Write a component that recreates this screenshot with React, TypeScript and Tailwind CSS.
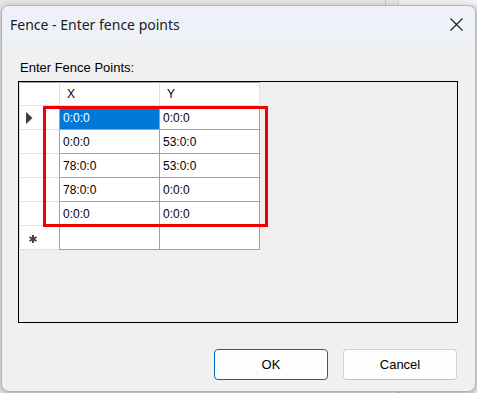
import React from 'react';

const rows: [string, string][] = [
  ['0:0:0', '0:0:0'],
  ['0:0:0', '53:0:0'],
  ['78:0:0', '53:0:0'],
  ['78:0:0', '0:0:0'],
  ['0:0:0', '0:0:0'],
];

const RowArrow: React.FC = () => (
  <svg width="7" height="12" viewBox="0 0 7 12" className="ml-[6px]">
    <path d="M0 0 L6.5 6 L0 12 Z" fill="#3c3c3c" />
  </svg>
);

const NewRowStar: React.FC = () => (
  <svg width="8" height="8" viewBox="0 0 8 8" className="ml-[9px] mt-[3px]">
    <g stroke="#444" strokeWidth="2" strokeLinecap="butt">
      <line x1="4" y1="0" x2="4" y2="8" />
      <line x1="0.5" y1="2" x2="7.5" y2="6" />
      <line x1="0.5" y1="6" x2="7.5" y2="2" />
    </g>
  </svg>
);

const App: React.FC = () => {
  return (
    <div className="relative w-[477px] h-[393px] bg-[#e8e8e8] pt-[5px] pl-[1px] overflow-hidden font-['Liberation_Sans',Arial,sans-serif]">
      {/* bits of the windows behind */}
      <div className="absolute left-[385px] top-0 w-px h-[6px] bg-[#c8c8c8]" />
      <div className="absolute left-[398px] top-0 w-px h-[6px] bg-[#d4d4d4]" />
      <div className="absolute left-[399px] top-0 w-[78px] h-[5px] bg-[#f4f4f4]" />
      <div className="absolute left-[398px] top-[390px] w-px h-[3px] bg-[#9a9a9a]" />

      <div className="relative w-[475px] h-[387px] flex flex-col rounded-[8px] border border-[#b4b4b4] bg-[#f0f0f0] shadow-[0_2px_10px_rgba(0,0,0,0.28)] overflow-hidden">
        <div className="h-[37px] shrink-0 flex items-center justify-between bg-[#eef2f8] pl-[8px] pr-[12px]">
          <span className="text-[14px] text-[#1b1b1b] font-['Noto_Sans',sans-serif]">Fence - Enter fence points</span>
          <svg width="13" height="13" viewBox="0 0 13 13">
            <path d="M0.5 0.5 L12.5 12.5 M12.5 0.5 L0.5 12.5" stroke="#1b1b1b" strokeWidth="1.1" />
          </svg>
        </div>

        <div className="flex-1 flex flex-col pl-[16px] pr-[17px]">
          <div className="pt-[17px] pl-[2px] text-[13px] leading-[15px] text-black">Enter Fence Points:</div>

          <div className="relative mt-[6px] w-[440px] h-[242px] border border-black bg-[#efefef]">
            <div className="grid grid-cols-[41px_100px_100px] w-max text-[12px] text-black">
              <div className="h-[24px] border-y border-l border-r border-t-[#a0a0a0] border-b-[#e0e0e0] border-x-[#e0e0e0] bg-white" />
              <div className="h-[24px] border-y border-r border-t-[#a0a0a0] border-b-[#e0e0e0] border-r-[#e0e0e0] bg-white flex items-center pl-[7px]">X</div>
              <div className="h-[24px] border-y border-r border-t-[#a0a0a0] border-b-[#e0e0e0] border-r-[#e0e0e0] bg-white flex items-center pl-[7px]">Y</div>

              {rows.map(([x, y], i) => (
                <React.Fragment key={i}>
                  <div className="h-[24px] border-l border-r border-b border-l-[#e0e0e0] border-b-[#e0e0e0] border-r-[#a0a0a0] bg-white flex items-center">
                    {i === 0 && <RowArrow />}
                  </div>
                  <div
                    className={`h-[24px] border-r border-b border-[#a0a0a0] flex items-center pl-[3px] pt-[1px] ${
                      i === 0 ? 'bg-[#0078d7] text-white' : 'bg-white'
                    }`}
                  >
                    {x}
                  </div>
                  <div className="h-[24px] border-r border-b border-[#a0a0a0] bg-white flex items-center pl-[3px] pt-[1px]">{y}</div>
                </React.Fragment>
              ))}

              <div className="h-[24px] border-l border-r border-b border-l-[#e0e0e0] border-b-[#e0e0e0] border-r-[#a0a0a0] bg-white flex items-center">
                <NewRowStar />
              </div>
              <div className="h-[24px] border-r border-b border-[#a0a0a0] bg-white" />
              <div className="h-[24px] border-r border-b border-[#a0a0a0] bg-white" />
            </div>

            {/* red annotation box */}
            <div className="absolute left-[24px] top-[24px] w-[225px] h-[121px] border-[3px] border-[#f00000] pointer-events-none" />
          </div>

          <div className="mt-[26px] flex justify-end gap-[15px] pr-px text-[13px] text-black">
            <button className="w-[114px] h-[31px] rounded-[4px] border border-[#0067c0] bg-[#fdfdfd]">OK</button>
            <button className="w-[114px] h-[31px] rounded-[4px] border border-[#d0d0d0] border-b-[#c0c0c0] bg-[#fdfdfd]">Cancel</button>
          </div>
        </div>
      </div>
    </div>
  );
};

export default App;
